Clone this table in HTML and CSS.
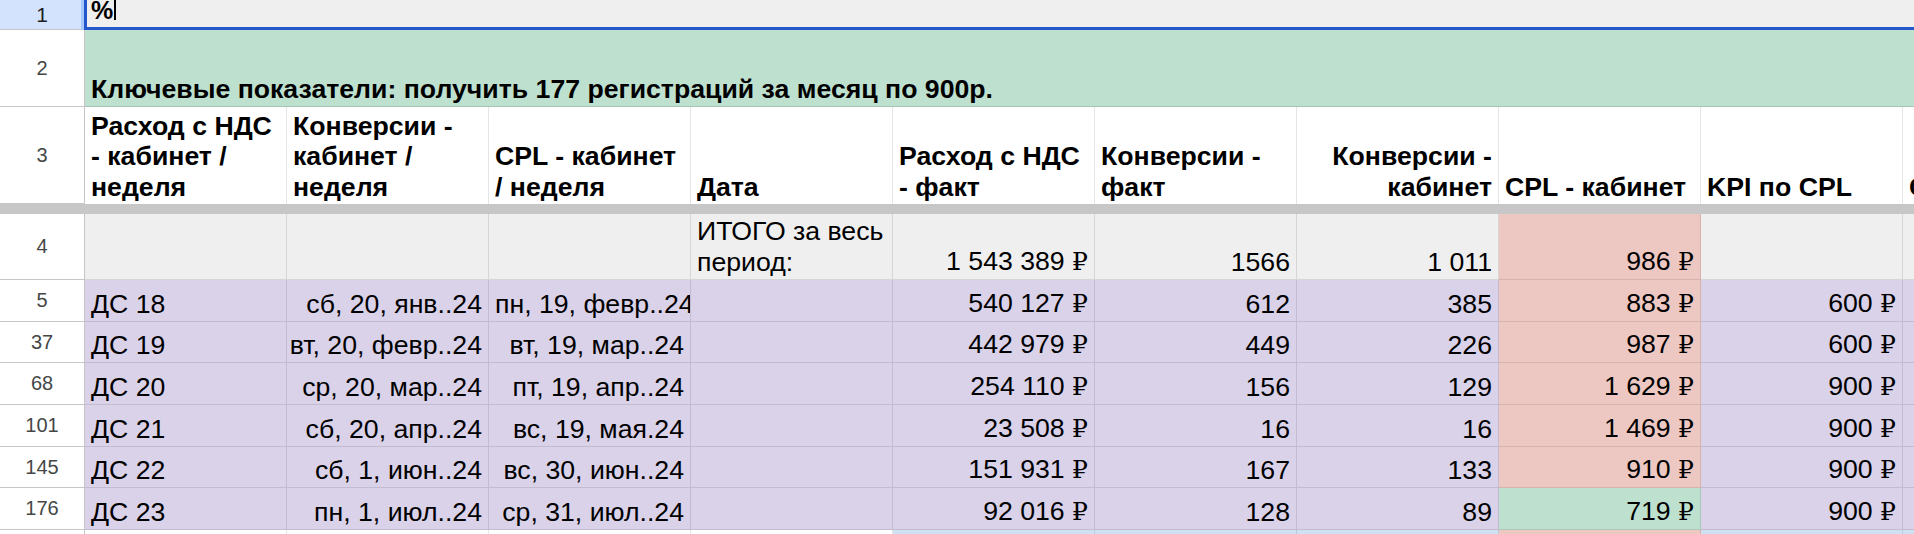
FILE: index.html
```html
<!DOCTYPE html>
<html lang="ru">
<head>
<meta charset="utf-8">
<title>Sheet</title>
<link rel="stylesheet" href="styles.css">
</head>
<body>
<div class="sheet">
  <div class="row r1">
    <div class="rh rh-sel">1</div>
    <div class="fill"></div>
    <div class="editor"><span class="pct">%</span><span class="caret"></span></div>
  </div>

  <div class="row r2">
    <div class="rh">2</div>
    <div class="merged">Ключевые показатели: получить 177 регистраций за месяц по 900р.</div>
  </div>

  <div class="row r3">
    <div class="rh">3</div>
    <div class="c hd">Расход с НДС<br>- кабинет /<br>неделя</div>
    <div class="c hd">Конверсии -<br>кабинет /<br>неделя</div>
    <div class="c hd">CPL - кабинет<br>/ неделя</div>
    <div class="c hd">Дата</div>
    <div class="c hd">Расход с НДС<br>- факт</div>
    <div class="c hd">Конверсии -<br>факт</div>
    <div class="c hd r">Конверсии -<br>кабинет</div>
    <div class="c hd">CPL - кабинет</div>
    <div class="c hd">KPI по CPL</div>
    <div class="c hd">CPL - факт</div>
  </div>

  <div class="freeze"></div>

  <div class="row r4">
    <div class="rh">4</div>
    <div class="c gray"></div>
    <div class="c gray"></div>
    <div class="c gray"></div>
    <div class="c gray">ИТОГО за весь<br>период:</div>
    <div class="c gray r"><span>1 543 389 <span class="rub">₽</span></span></div>
    <div class="c gray r">1566</div>
    <div class="c gray r">1 011</div>
    <div class="c red r"><span>986 <span class="rub">₽</span></span></div>
    <div class="c gray"></div>
    <div class="c gray"></div>
  </div>

  <div class="row h42">
    <div class="rh">5</div>
    <div class="c pur">ДС 18</div>
    <div class="c pur r">сб, 20, янв..24</div>
    <div class="c pur">пн, 19, февр..24</div>
    <div class="c pur"></div>
    <div class="c pur r"><span>540 127 <span class="rub">₽</span></span></div>
    <div class="c pur r">612</div>
    <div class="c pur r">385</div>
    <div class="c red r"><span>883 <span class="rub">₽</span></span></div>
    <div class="c pur r"><span>600 <span class="rub">₽</span></span></div>
    <div class="c pur"></div>
  </div>

  <div class="row h41">
    <div class="rh">37</div>
    <div class="c pur">ДС 19</div>
    <div class="c pur r">вт, 20, февр..24</div>
    <div class="c pur r">вт, 19, мар..24</div>
    <div class="c pur"></div>
    <div class="c pur r"><span>442 979 <span class="rub">₽</span></span></div>
    <div class="c pur r">449</div>
    <div class="c pur r">226</div>
    <div class="c red r"><span>987 <span class="rub">₽</span></span></div>
    <div class="c pur r"><span>600 <span class="rub">₽</span></span></div>
    <div class="c pur"></div>
  </div>

  <div class="row h42">
    <div class="rh">68</div>
    <div class="c pur">ДС 20</div>
    <div class="c pur r">ср, 20, мар..24</div>
    <div class="c pur r">пт, 19, апр..24</div>
    <div class="c pur"></div>
    <div class="c pur r"><span>254 110 <span class="rub">₽</span></span></div>
    <div class="c pur r">156</div>
    <div class="c pur r">129</div>
    <div class="c red r"><span>1 629 <span class="rub">₽</span></span></div>
    <div class="c pur r"><span>900 <span class="rub">₽</span></span></div>
    <div class="c pur"></div>
  </div>

  <div class="row h42">
    <div class="rh">101</div>
    <div class="c pur">ДС 21</div>
    <div class="c pur r">сб, 20, апр..24</div>
    <div class="c pur r">вс, 19, мая.24</div>
    <div class="c pur"></div>
    <div class="c pur r"><span>23 508 <span class="rub">₽</span></span></div>
    <div class="c pur r">16</div>
    <div class="c pur r">16</div>
    <div class="c red r"><span>1 469 <span class="rub">₽</span></span></div>
    <div class="c pur r"><span>900 <span class="rub">₽</span></span></div>
    <div class="c pur"></div>
  </div>

  <div class="row h41">
    <div class="rh">145</div>
    <div class="c pur">ДС 22</div>
    <div class="c pur r">сб, 1, июн..24</div>
    <div class="c pur r">вс, 30, июн..24</div>
    <div class="c pur"></div>
    <div class="c pur r"><span>151 931 <span class="rub">₽</span></span></div>
    <div class="c pur r">167</div>
    <div class="c pur r">133</div>
    <div class="c red r"><span>910 <span class="rub">₽</span></span></div>
    <div class="c pur r"><span>900 <span class="rub">₽</span></span></div>
    <div class="c pur"></div>
  </div>

  <div class="row h42">
    <div class="rh">176</div>
    <div class="c pur">ДС 23</div>
    <div class="c pur r">пн, 1, июл..24</div>
    <div class="c pur r">ср, 31, июл..24</div>
    <div class="c pur"></div>
    <div class="c pur r"><span>92 016 <span class="rub">₽</span></span></div>
    <div class="c pur r">128</div>
    <div class="c pur r">89</div>
    <div class="c grn r"><span>719 <span class="rub">₽</span></span></div>
    <div class="c pur r"><span>900 <span class="rub">₽</span></span></div>
    <div class="c pur"></div>
  </div>

  <div class="row h42">
    <div class="rh">207</div>
    <div class="c"></div>
    <div class="c"></div>
    <div class="c"></div>
    <div class="c"></div>
    <div class="c blu"></div>
    <div class="c blu"></div>
    <div class="c blu"></div>
    <div class="c red"></div>
    <div class="c blu"></div>
    <div class="c blu"></div>
  </div>
</div>
</body>
</html>
```

FILE: styles.css
```css
html, body {
  margin: 0;
  padding: 0;
}
body {
  width: 1914px;
  height: 534px;
  overflow: hidden;
  background: #ffffff;
  font-family: "Liberation Sans", Arial, sans-serif;
  color: #000;
}
.sheet {
  width: 2300px;
}
.row {
  display: flex;
  position: relative;
}
.rh {
  flex: none;
  width: 85px;
  box-sizing: border-box;
  border-right: 1px solid #c4c7c5;
  border-bottom: 1px solid #c4c7c5;
  background: #ffffff;
  display: flex;
  align-items: center;
  justify-content: center;
  font-size: 20px;
  color: #444746;
}
.rh-sel {
  background: #d3e3fd;
  color: #1f1f1f;
  font-size: 21px;
}
.r1 { height: 30px; }
.r1 .fill {
  flex: 1;
  background: #efefef;
  border-bottom: 1px solid #e0e0e0;
}
.editor {
  position: absolute;
  left: 84px;
  top: -10px;
  right: 0;
  height: 40px;
  box-sizing: border-box;
  border: 3px solid #2456cc;
  box-shadow: 0 0 0 3px #a8c7fa;
  background: #efefef;
  display: flex;
  align-items: flex-end;
  padding: 0 0 6px 4px;
}
.pct {
  font-weight: bold;
  font-size: 25px;
  line-height: 22px;
}
.caret {
  display: inline-block;
  width: 1.5px;
  height: 21px;
  margin-left: 1px;
  margin-bottom: 1px;
  background: #000;
}
.r2 { height: 77px; }
.merged {
  flex: 1;
  background: #bee0cf;
  border-bottom: 1px solid rgba(0, 0, 0, 0.12);
  display: flex;
  align-items: flex-end;
  padding: 0 6px 2px;
  font-weight: bold;
  font-size: 26.67px;
  line-height: 30px;
  white-space: nowrap;
}
.c {
  flex: none;
  width: 202px;
  box-sizing: border-box;
  border-right: 1px solid rgba(0, 0, 0, 0.1);
  border-bottom: 1px solid rgba(0, 0, 0, 0.1);
  padding: 0 6px 2px;
  display: flex;
  align-items: flex-end;
  overflow: hidden;
  white-space: nowrap;
  font-size: 26.67px;
  line-height: 30.5px;
  background: #ffffff;
}
.c.r {
  justify-content: flex-end;
  text-align: right;
}
.rub {
  font-family: "Liberation Serif", "DejaVu Serif", serif;
  font-size: 25px;
}
.r3 { height: 97px; }
.r3 .c { border-bottom: 0; }
.hd { font-weight: bold; }
.freeze {
  height: 10px;
  background: #c7c7c7;
}
.r4 { height: 66px; }
.h42 { height: 42px; }
.h41 { height: 41px; }
.gray { background: #efefef; }
.pur { background: #d9d2e9; }
.red { background: #edc8c2; }
.grn { background: #bee0cf; }
.blu { background: #cfe0f0; }
```
